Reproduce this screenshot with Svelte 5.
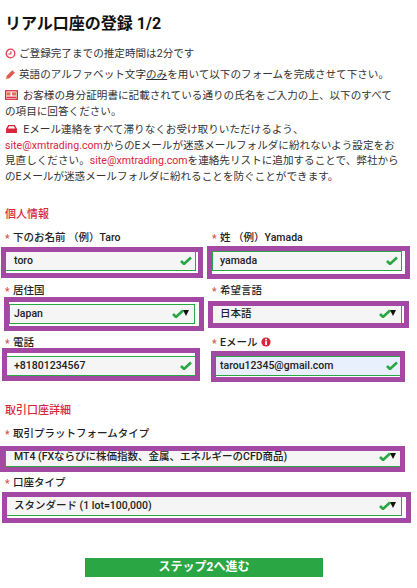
<script>
  const check = 'M1 5 L4 8 L11 1.5';
</script>

{#snippet tick()}
  <svg class="tick" viewBox="0 0 12 9" width="12" height="9" aria-hidden="true"><path d={check} fill="none" stroke="#28a745" stroke-width="2.6"/></svg>
{/snippet}

{#snippet arrow()}
  <span class="arrow"></span>
{/snippet}

<main class="page">
  <h1>リアル口座の登録 1/2</h1>

  <p class="note one">
    <svg class="ico" viewBox="0 0 10 10" aria-hidden="true"><circle cx="5" cy="5" r="3.9" fill="none" stroke="#d9434e" stroke-width="1.2"/><path d="M3 5.4H5.4V3" fill="none" stroke="#d9434e"/></svg>
    ご登録完了までの推定時間は2分です
  </p>
  <p class="note one">
    <svg class="ico" viewBox="0 0 10 10" aria-hidden="true"><path d="M.8 9.2 L1.6 6.2 L6.6 1.2 L9 3.4 L4 8.4Z" fill="#e0584f"/><path d="M.8 9.2 L1.4 7 L3 8.6Z" fill="#e8a05c"/></svg>
    英語のアルファベット文字<u>のみ</u>を用いて以下のフォームを完成させて下さい。
  </p>
  <p class="note two">
    <svg class="ico wide" viewBox="0 0 12 9" aria-hidden="true"><rect x=".6" y=".6" width="10.8" height="7.8" fill="#fff" stroke="#d8253a" stroke-width="1.2"/><rect x="1.5" y="2" width="3.6" height="3" fill="#e8705a"/><rect x="6.4" y="2" width="4" height="3" fill="#e8705a"/><rect x="1.5" y="6" width="9" height="1.2" fill="#d8253a"/></svg>
    お客様の身分証明書に記載されている通りの氏名をご入力の上、以下のすべて<br />の項目に回答ください。
  </p>
  <p class="note three">
    <svg class="ico wide" viewBox="0 0 12 9" aria-hidden="true"><path d="M1 4.2 L3 .8H9L11 4.2V8.2H1Z" fill="#d8253a"/><path d="M2.6 4 L3.8 1.9H8.2L9.4 4Z" fill="#fff"/></svg>
    &nbsp;Eメール連絡をすべて滞りなくお受け取りいただけるよう、<br /><a href="#mail">site@xmtrading.com</a>からのEメールが迷惑メールフォルダに紛れないよう設定をお<br />見直しください。<a href="#mail">site@xmtrading.com</a>を連絡先リストに追加することで、弊社から<br />のEメールが迷惑メールフォルダに紛れることを防ぐことができます。
  </p>

  <h2 class="personal">個人情報</h2>
  <div class="grid">
    <div class="field">
      <div class="label"><span class="req">*</span>下のお名前 （例）Taro</div>
      <div class="input"><span>toro</span>{@render tick()}</div>
      <div class="mark m1"></div>
    </div>
    <div class="field right">
      <div class="label"><span class="req">*</span>姓 （例）Yamada</div>
      <div class="input"><span>yamada</span>{@render tick()}</div>
      <div class="mark m2"></div>
    </div>
    <div class="field">
      <div class="label"><span class="req">*</span>居住国</div>
      <div class="input select narrow"><span>Japan</span>{@render tick()}{@render arrow()}</div>
      <div class="mark m3"></div>
    </div>
    <div class="field right">
      <div class="label"><span class="req">*</span>希望言語</div>
      <div class="input select"><span>日本語</span>{@render tick()}{@render arrow()}</div>
      <div class="mark m4"></div>
    </div>
    <div class="field">
      <div class="label"><span class="req">*</span>電話</div>
      <div class="input"><span>+81801234567</span>{@render tick()}</div>
      <div class="mark m5"></div>
    </div>
    <div class="field right">
      <div class="label"><span class="req">*</span>Eメール
        <svg class="info" viewBox="0 0 10 10" width="10" height="10" aria-hidden="true"><circle cx="5" cy="5" r="4.6" fill="#d8253a"/><rect x="4.1" y="1.8" width="1.8" height="1.6" fill="#fff"/><rect x="4.1" y="4.2" width="1.8" height="3.8" fill="#fff"/></svg>
      </div>
      <div class="input filled"><span>tarou12345@gmail.com</span>{@render tick()}</div>
      <div class="mark m6"></div>
    </div>
  </div>

  <h2 class="account">取引口座詳細</h2>
  <div class="field full">
    <div class="label"><span class="req">*</span>取引プラットフォームタイプ</div>
    <div class="input select"><span>MT4 (FXならびに株価指数、金属、エネルギーのCFD商品)</span>{@render tick()}{@render arrow()}</div>
    <div class="mark m7"></div>
  </div>
  <div class="field full">
    <div class="label"><span class="req">*</span>口座タイプ</div>
    <div class="input select"><span>スタンダード (1 lot=100,000)</span>{@render tick()}{@render arrow()}</div>
    <div class="mark m8"></div>
  </div>

  <div class="actions"><button type="button">ステップ2へ進む</button></div>
</main>

<style>
  :global(body) { margin: 0; background: #fff; }
  .page {
    width: 417px; height: 588px; box-sizing: border-box; overflow: hidden;
    padding: 0 15px 0 5px;
    font-family: Roboto, "Noto Sans CJK JP", sans-serif;
    color: #333; font-size: 10.6px; line-height: 16px;
  }
  h1 { margin: 0; padding: 15px 0 0 0; font-size: 16px; line-height: 18px; font-weight: 700; color: #111; }
  .note { margin: 0; position: relative; width: 405px; white-space: nowrap; }
  .note.one { margin-top: 12px; padding-left: 14px; line-height: 9px; }
  h1 + .note.one { margin-top: 16px; }
  .note.two { margin-top: 9px; line-height: 16px; }
  .note.three { margin-top: 2px; line-height: 15.7px; }
  .ico { width: 11px; height: 11px; vertical-align: -1px; margin-right: 3px; }
  .note.one .ico { position: absolute; left: 0; top: -1px; }
  .ico.wide { width: 13px; height: 10px; vertical-align: -1px; margin-right: 0; }
  .note.two .ico.wide { margin-right: 2px; }
  a { color: #d8253a; text-decoration: none; }
  u { text-underline-offset: 1px; }
  h2 { margin: 0; font-size: 11px; line-height: 16px; font-weight: 500; color: #d8253a; }
  h2.personal { margin-top: 22px; }
  h2.account { margin-top: 27px; }
  .grid { display: grid; grid-template-columns: 191px 190px; grid-template-rows: 53px 52px 40px; column-gap: 16px; margin-top: 8px; }
  .field { position: relative; }
  .field.full + .field.full { margin-top: 9px; }
  h2.account + .field.full { margin-top: 8px; }
  .label { height: 20px; padding-left: 8px; position: relative; font-size: 10.5px; line-height: 13px; font-weight: 500; color: #222; white-space: nowrap; }
  .req { position: absolute; left: 0; top: 1px; color: #d8533f; }
  .info { vertical-align: -1.5px; margin-left: 1px; }
  .input {
    position: relative; box-sizing: border-box; height: 20px; display: flex; align-items: center;
    padding: 0 3px 0 8px; background: #f5f5f5; border: 1px solid #28a745;
    font-size: 10.5px; font-weight: 500; color: #222; white-space: nowrap;
  }
  .input span { flex: 1; }
  .right .input { padding-left: 7px; }
  .input.filled { background: #e8f0fe; }
  .input.select, .right .input.select { padding-right: 10px; }
  .input.narrow { margin-left: 4px; padding-left: 4px; margin-right: 1px; }
  .tick { flex: none; margin-top: -1px; }
  .input .arrow { position: absolute; flex: none; right: 5px; top: 5px; width: 0; height: 0; border-left: 3px solid transparent; border-right: 3px solid transparent; border-top: 6px solid #111; }
  .mark { position: absolute; box-sizing: border-box; border: 5px solid #a349a4; pointer-events: none; }
  .m1 { left: -4px; top: 16px; width: 202px; height: 31px; }
  .m2 { left: -5px; top: 15px; width: 203px; height: 33px; }
  .m3 { left: -1px; top: 13px; width: 200px; height: 34px; }
  .m4 { left: -4px; top: 17px; width: 201px; height: 27px; }
  .m5 { left: -3px; top: 12px; width: 198px; height: 33px; }
  .m6 { left: -1px; top: 15px; width: 194px; height: 31px; }
  .m7 { left: -5px; top: 19px; width: 405px; height: 26px; }
  .m8 { left: -3px; top: 16px; width: 409px; height: 31px; }
  .actions { display: flex; justify-content: center; margin-top: 42px; padding-left: 1px; }
  button {
    width: 238px; height: 19px; padding: 0; border: 0; background: #2aa744; color: #fff;
    font: 700 12px/19px Roboto, "Noto Sans CJK JP", sans-serif;
  }
</style>
